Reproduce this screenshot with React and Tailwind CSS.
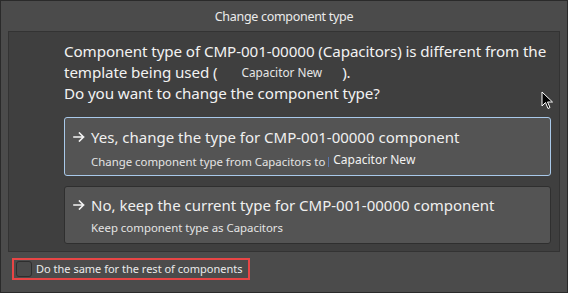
function Arrow() {
  return (
    <svg width="12" height="10" viewBox="0 0 12 10" className="shrink-0">
      <path d="M1 5 H10.5 M6.5 1 L10.5 5 L6.5 9" fill="none" stroke="#f4f4f4" strokeWidth="1.6" strokeLinecap="square" />
    </svg>
  );
}

export default function App() {
  const font = { fontFamily: '"Noto Sans", "Open Sans", sans-serif' };
  return (
    <div style={font} className="w-[568px] h-[293px] bg-[#4b4b4b] border border-[#2a2a2a] flex flex-col relative overflow-hidden whitespace-nowrap">
      <div className="h-[30px] flex items-center justify-center text-[12.5px] tracking-[-0.3px] text-[#ececec] pt-[3px]">Change component type</div>
      <div className="mx-[7px] h-[221px] bg-[#3f3f3f] border border-[#333333] pl-[55px] pr-[8px] pt-[9px] flex flex-col">
        <div className="text-[15.2px] leading-[21px] text-[#f2f2f2] tracking-[-0.1px]">
          <div>Component type of CMP-001-00000 (Capacitors) is different from the</div>
          <div className="flex items-center">template being used (<span className="text-[11.8px] ml-[24px] mr-[20px] text-[#e6e6e6] tracking-normal">Capacitor New</span>).</div>
          <div>Do you want to change the component type?</div>
        </div>
        <div className="mt-[13px] h-[59px] rounded-[3px] border border-[#a9c9ea] bg-[#545454] flex flex-col pl-[8px]">
          <div className="flex items-center mt-[9px] h-[20px] text-[15px] text-[#f0f0f0]">
            <span className="w-[18px] flex"><Arrow /></span>
            <span>Yes, change the type for CMP-001-00000 component</span>
          </div>
          <div className="flex items-center ml-[18px] mt-[7px] h-[16px] text-[11.4px] text-[#e4e4e4]">
            <span>Change component type from Capacitors to</span>
            <span className="ml-[3px] w-px h-[10px] bg-[#5a78b0]"></span>
            <span className="ml-[4px] text-[12px] text-[#f2f2f2] -mt-[5px]">Capacitor New</span>
          </div>
        </div>
        <div className="mt-[10px] h-[58px] rounded-[3px] border border-[#2f2f2f] bg-[#545454] flex flex-col pl-[8px]">
          <div className="flex items-center mt-[8px] h-[20px] text-[15px] text-[#f0f0f0]">
            <span className="w-[18px] flex"><Arrow /></span>
            <span>No, keep the current type for CMP-001-00000 component</span>
          </div>
          <div className="flex items-center ml-[18px] mt-[5px] h-[16px] text-[11.4px] text-[#e4e4e4]">
            <span>Keep component type as Capacitors</span>
          </div>
        </div>
      </div>
      <div className="ml-[11px] mt-[6px] w-[238px] h-[22px] border-2 border-[#e84545] flex items-center pl-[2px]">
        <div className="w-[16px] h-[16px] rounded-[3px] border border-[#2e2e2e] bg-[#4a4a4a] shrink-0"></div>
        <span className="ml-[4px] text-[11px] text-[#eaeaea]">Do the same for the rest of components</span>
      </div>
      <svg className="absolute left-[540px] top-[90px]" width="14" height="20" viewBox="0 0 14 20">
        <path d="M1 1 L1 15 L4.5 11.5 L7 17.5 L9 16.5 L6.5 11 L11.5 11 Z" fill="#000" stroke="#fff" strokeWidth="1" strokeLinejoin="round" />
      </svg>
    </div>
  );
}
